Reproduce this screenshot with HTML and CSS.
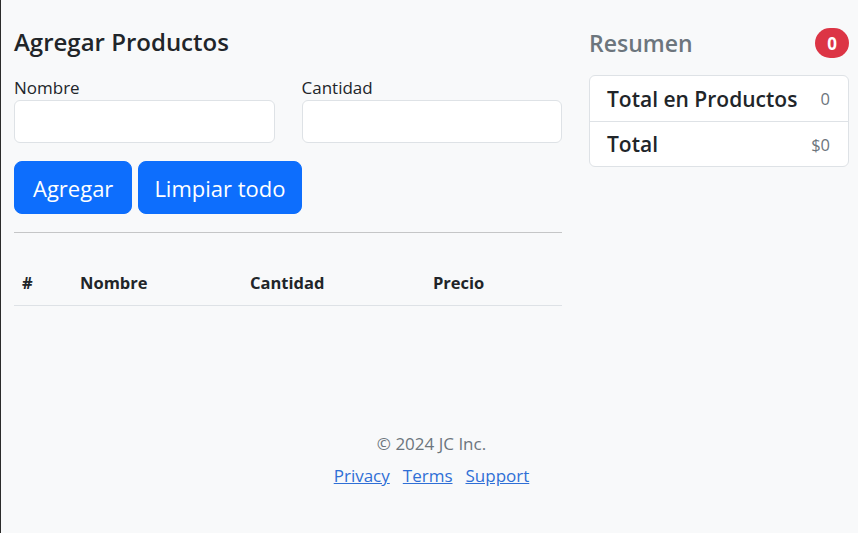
FILE: index.html
```html
<!DOCTYPE html>
<html lang="es">
<head>
<meta charset="utf-8">
<title>Agregar Productos</title>
<link rel="stylesheet" href="styles.css">
</head>
<body>
<div class="page">
  <main class="layout">
    <section class="main-col">
      <h4 class="title">Agregar Productos</h4>
      <div class="form-row">
        <div class="field">
          <label class="label" for="nombre">Nombre</label>
          <input class="input" id="nombre" type="text">
        </div>
        <div class="field">
          <label class="label" for="cantidad">Cantidad</label>
          <input class="input" id="cantidad" type="text">
        </div>
      </div>
      <div class="actions">
        <button class="btn">Agregar</button>
        <button class="btn">Limpiar todo</button>
      </div>
      <hr class="divider">
      <table class="table">
        <thead>
          <tr>
            <th class="c-num">#</th>
            <th class="c-name">Nombre</th>
            <th class="c-qty">Cantidad</th>
            <th class="c-price">Precio</th>
          </tr>
        </thead>
        <tbody></tbody>
      </table>
    </section>
    <aside class="side-col">
      <div class="side-head">
        <h4 class="side-title">Resumen</h4>
        <span class="badge">0</span>
      </div>
      <ul class="list">
        <li class="list-item"><span class="item-label">Total en Productos</span><span class="item-value">0</span></li>
        <li class="list-item"><span class="item-label">Total</span><span class="item-value">$0</span></li>
      </ul>
    </aside>
  </main>
  <footer class="footer">
    <p class="copy">© 2024 JC Inc.</p>
    <ul class="links">
      <li><a href="#">Privacy</a></li>
      <li><a href="#">Terms</a></li>
      <li><a href="#">Support</a></li>
    </ul>
  </footer>
</div>
</body>
</html>
```
FILE: styles.css
```css
* { box-sizing: border-box; }
html, body { height: 100%; }
body {
  margin: 0;
  background: #f8f9fa;
  border-left: 1px solid #2b2b2b;
  font-family: "Open Sans", "Noto Sans", sans-serif;
  color: #212529;
  font-size: 16px;
}
.page { padding: 28px 9px 0 13px; }
.layout { display: flex; gap: 27px; }
.main-col { width: 548px; }
.side-col { width: 260px; }
.title {
  margin: 0 0 20px;
  font-size: 24px;
  font-weight: 600;
  line-height: 28px;
}
.form-row { display: flex; gap: 27px; }
.field { flex: 1; display: flex; flex-direction: column; }
.label { line-height: 24px; font-size: 17px; }
.input {
  height: 43px;
  border: 1px solid #dee2e6;
  border-radius: 6px;
  background: #fff;
  font: inherit;
  padding: 6px 12px;
}
.actions { display: flex; gap: 6px; margin-top: 18px; }
.btn {
  background: #0d6efd;
  color: #fff;
  border: 1px solid #0d6efd;
  border-radius: 8px;
  font: inherit;
  font-size: 22px;
  line-height: 30px;
  padding: 10px 18px;
  height: 53px;
}
.btn + .btn { padding: 10px 15px; }
.divider {
  margin: 18px 0 0;
  border: 0;
  border-top: 1px solid #c5c6c7;
}
.table {
  margin-top: 31px;
  width: 100%;
  border-collapse: collapse;
}
.table th {
  text-align: left;
  font-weight: 700;
  font-size: 16.5px;
  padding: 7px 8px 10px;
  line-height: 24px;
  border-bottom: 1px solid #dee2e6;
}
.c-num { width: 58px; }
.c-name { width: 170px; }
.c-qty { width: 183px; }
.side-head {
  display: flex;
  justify-content: space-between;
  align-items: center;
  margin-bottom: 17px;
}
.side-title {
  margin: 0;
  font-size: 23px;
  font-weight: 600;
  line-height: 28px;
  color: #6c757d;
}
.badge {
  background: #dc3545;
  color: #fff;
  font-weight: 700;
  font-size: 17px;
  line-height: 17px;
  padding: 7px 12px 6px;
  border-radius: 50rem;
  margin-right: 0;
}
.list {
  list-style: none;
  margin: 0;
  padding: 0;
  background: #fff;
  border: 1px solid #dee2e6;
  border-radius: 6px;
}
.list-item {
  display: flex;
  justify-content: space-between;
  align-items: center;
  height: 45px;
  padding: 0 18px 0 17px;
}
.list-item + .list-item { border-top: 1px solid #dee2e6; }
.item-label { font-size: 21px; font-weight: 600; }
.item-value { color: #6c757d; font-size: 16.5px; }
.footer {
  text-align: center;
  margin-top: 126px;
  color: #6c757d;
}
.copy { margin: 0; line-height: 24px; font-size: 17px; }
.links {
  list-style: none;
  margin: 8px 0 0;
  padding: 0;
  display: flex;
  justify-content: center;
  gap: 13px;
}
.links a { color: #2f6fd6; font-size: 17px; line-height: 24px; }
```
